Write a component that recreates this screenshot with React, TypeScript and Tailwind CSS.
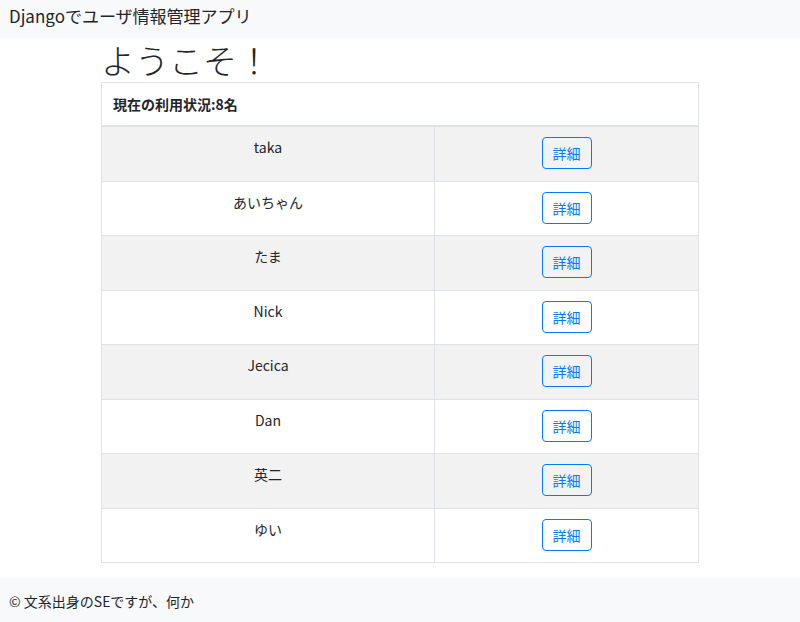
import React from "react";

const users = ["taka", "あいちゃん", "たま", "Nick", "Jecica", "Dan", "英二", "ゆい"];

export default function App() {
  const font = { fontFamily: '"Noto Sans CJK JP", "Noto Sans", sans-serif' };
  return (
    <div className="min-h-[622px] bg-white text-[#212529]" style={font}>
      <nav className="h-[38px] bg-[#f8f9fa] flex items-center px-[9px]">
        <span className="text-[17px] leading-none text-[#212529] -mt-[8px]">Djangoでユーザ情報管理アプリ</span>
      </nav>
      <main className="pl-[101px] w-[699px]">
        <h1 className="text-[34px] leading-[44px] font-light text-[#212529]">ようこそ！</h1>
        <div className="border border-[#dee2e6]">
          <div className="h-[43px] flex items-center px-[11px] border-b border-[#dee2e6] text-[14px] font-bold">
            現在の利用状況:8名
          </div>
          {users.map((u, i) => (
            <div
              key={u}
              className={`flex h-[54.5px] border-t border-[#dee2e6] first:border-t-0 ${i % 2 === 0 ? "bg-[#f2f2f2]" : "bg-white"}`}
            >
              <div className="w-[333px] border-r border-[#dee2e6] text-center text-[14px] leading-[21px] pt-[10px]">
                {u}
              </div>
              <div className="flex-1 flex justify-center pt-[10px]">
                <button className="w-[50px] h-[32px] border border-[#007bff] rounded-[4px] text-[#007bff] text-[14px] leading-none">
                  詳細
                </button>
              </div>
            </div>
          ))}
        </div>
      </main>
      <footer className="mt-[15px] h-[46px] bg-[#f8f9fa] flex items-center px-[9px]">
        <span className="text-[14px] text-[#212529]">© 文系出身のSEですが、何か</span>
      </footer>
    </div>
  );
}
